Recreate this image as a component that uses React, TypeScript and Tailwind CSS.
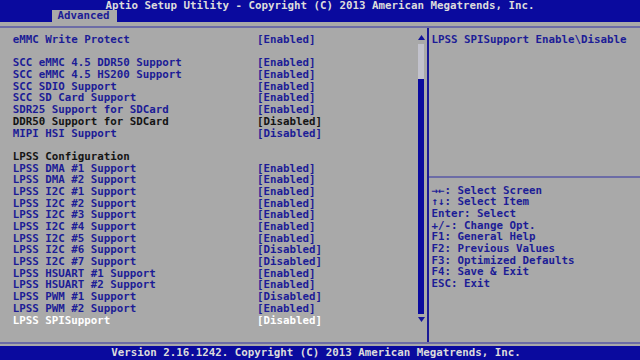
import React from 'react'

type Row = { label: string; value?: string; kind?: 'blue' | 'gray' | 'sel' }

const ROWS: (Row | null)[] = [
  { label: 'eMMC Write Protect', value: '[Enabled]' },
  null,
  { label: 'SCC eMMC 4.5 DDR50 Support', value: '[Enabled]' },
  { label: 'SCC eMMC 4.5 HS200 Support', value: '[Enabled]' },
  { label: 'SCC SDIO Support', value: '[Enabled]' },
  { label: 'SCC SD Card Support', value: '[Enabled]' },
  { label: 'SDR25 Support for SDCard', value: '[Enabled]' },
  { label: 'DDR50 Support for SDCard', value: '[Disabled]', kind: 'gray' },
  { label: 'MIPI HSI Support', value: '[Disabled]' },
  null,
  { label: 'LPSS Configuration', kind: 'gray' },
  { label: 'LPSS DMA #1 Support', value: '[Enabled]' },
  { label: 'LPSS DMA #2 Support', value: '[Enabled]' },
  { label: 'LPSS I2C #1 Support', value: '[Enabled]' },
  { label: 'LPSS I2C #2 Support', value: '[Enabled]' },
  { label: 'LPSS I2C #3 Support', value: '[Enabled]' },
  { label: 'LPSS I2C #4 Support', value: '[Enabled]' },
  { label: 'LPSS I2C #5 Support', value: '[Enabled]' },
  { label: 'LPSS I2C #6 Support', value: '[Disabled]' },
  { label: 'LPSS I2C #7 Support', value: '[Disabled]' },
  { label: 'LPSS HSUART #1 Support', value: '[Enabled]' },
  { label: 'LPSS HSUART #2 Support', value: '[Enabled]' },
  { label: 'LPSS PWM #1 Support', value: '[Disabled]' },
  { label: 'LPSS PWM #2 Support', value: '[Enabled]' },
  { label: 'LPSS SPISupport', value: '[Disabled]', kind: 'sel' },
]

const KEYS = [
  '→←: Select Screen',
  '↑↓: Select Item',
  'Enter: Select',
  '+/-: Change Opt.',
  'F1: General Help',
  'F2: Previous Values',
  'F3: Optimized Defaults',
  'F4: Save & Exit',
  'ESC: Exit',
]

const COLOR = {
  blue: 'text-[#1c1c96]',
  gray: 'text-[#141414]',
  sel: 'text-[#ffffff]',
}

export default function App() {
  return (
    <div
      className="w-[640px] h-[360px] bg-[#a9a9a9] flex flex-col overflow-hidden font-bold text-[10.8px] leading-[11.7px] whitespace-pre"
      style={{ fontFamily: '"DejaVu Sans Mono", "Liberation Mono", monospace' }}
    >
      {/* title bar */}
      <div className="h-[22px] bg-[#0a0a9e] flex flex-col">
        <div className="h-[10px] leading-[12px] text-center text-[#dcdcdc]">
          Aptio Setup Utility - Copyright (C) 2013 American Megatrends, Inc.
        </div>
        <div className="mt-auto ml-[52px] w-[65px] h-[12px] bg-[#a9a9a9] pl-[5.5px] text-[#1c1c96] leading-[11px]">
          Advanced
        </div>
      </div>

      {/* main frame */}
      <div className="mt-[4px] h-[318px] border-y-2 border-[#6c6ca6] flex">
        {/* settings list */}
        <div className="w-[416px] pl-[12.7px] pt-[6px]">
          {ROWS.map((r, i) =>
            r ? (
              <div key={i} className={`flex h-[11.7px] ${COLOR[r.kind ?? 'blue']}`}>
                <span className="w-[244.3px]">{r.label}</span>
                {r.value && <span>{r.value}</span>}
              </div>
            ) : (
              <div key={i} className="h-[11.7px]" />
            )
          )}
        </div>

        {/* scrollbar */}
        <div className="w-[10px] flex flex-col items-center pt-[7px] pb-[20px]">
          <svg width="7" height="5" viewBox="0 0 7 5">
            <path d="M3.5 0 L7 5 L0 5 Z" fill="#14149a" />
          </svg>
          <div className="mt-[4px] w-[6px] flex-1 flex flex-col">
            <div className="h-[35px] bg-[#c2c2cc]" />
            <div className="flex-1 bg-[#0a0a9e]" />
          </div>
          <svg className="mt-[3px]" width="7" height="5" viewBox="0 0 7 5">
            <path d="M0 0 L7 0 L3.5 5 Z" fill="#14149a" />
          </svg>
        </div>

        {/* help panel */}
        <div className="flex-1 border-l-2 border-[#1a1a96] ml-[1px] flex flex-col text-[#1c1c96]">
          <div className="h-[150px] border-b-2 border-[#6c6ca6] pl-[2.5px] pt-[6px]">
            <div className="h-[11.7px]">LPSS SPISupport Enable\Disable</div>
          </div>
          <div className="pl-[2.5px] pt-[6.6px]">
            {KEYS.map(k => (
              <div key={k} className="h-[11.7px]">
                {k}
              </div>
            ))}
          </div>
        </div>
      </div>

      {/* footer */}
      <div className="mt-auto h-[14px] bg-[#0a0a9e] text-center text-[#dcdcdc] leading-[14px] pr-[8px]">
        Version 2.16.1242. Copyright (C) 2013 American Megatrends, Inc.
      </div>
    </div>
  )
}
